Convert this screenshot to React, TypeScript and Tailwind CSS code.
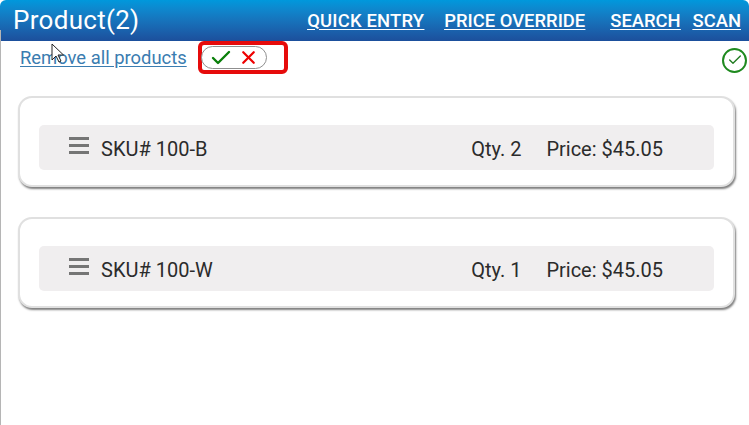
import { Check, X } from "lucide-react";

type Product = {
  sku: string;
  qty: number;
  price: string;
};

const products: Product[] = [
  { sku: "100-B", qty: 2, price: "$45.05" },
  { sku: "100-W", qty: 1, price: "$45.05" },
];

function ProductCard({ sku, qty, price }: Product) {
  return (
    <div className="h-[91px] rounded-[14px] border-2 border-[#e0e0e0] bg-white px-[19px] pt-[27px] shadow-[1px_2px_2px_rgba(0,0,0,0.5)]">
      <div className="flex h-[45px] items-center rounded-[5px] bg-[#f0eeef] pt-[2px] text-[20px] text-[#2b2b2b]">
        <div className="ml-[30px] flex w-[20px] -translate-y-[3px] flex-col gap-[4px]">
          <span className="h-[3px] bg-[#757575]" />
          <span className="h-[3px] bg-[#757575]" />
          <span className="h-[3px] bg-[#757575]" />
        </div>
        <span className="ml-[12px]">SKU# {sku}</span>
        <span className="ml-auto">Qty. {qty}</span>
        <span className="ml-[25px] mr-[51px]">Price: {price}</span>
      </div>
    </div>
  );
}

export default function App() {
  return (
    <div className="relative h-[425px] w-[749px] overflow-hidden bg-white font-['Roboto',sans-serif]">
      <div className="absolute bottom-0 left-0 top-[30px] w-px bg-[#b5b5b5]" />

      <header className="flex h-[41px] items-center rounded-t-[6px] bg-gradient-to-b from-[#0098dc] to-[#1c4f9c] pl-[13px] pr-[8px] text-white">
        <h1 className="text-[26px] font-normal tracking-[0.3px]">Product(2)</h1>
        <nav className="ml-auto flex text-[18.4px] font-medium underline underline-offset-2">
          <a className="mr-[20px] tracking-[0.2px]">QUICK ENTRY</a>
          <a className="mr-[25px]">PRICE OVERRIDE</a>
          <a className="mr-[12px]">SEARCH</a>
          <a>SCAN</a>
        </nav>
      </header>

      <div className="flex h-[33px] items-center pl-[20px] pr-[2px]">
        <a className="text-[18.4px] text-[#3a7cb0] underline underline-offset-2">Remove all products</a>
        <div className="ml-[11px] flex h-[33px] w-[90px] items-center rounded-[6px] border-[4px] border-[#e60b0b]">
          <div className="-ml-px flex h-[23px] w-[66px] shrink-0 items-center gap-[5px] rounded-full border border-[#8f8f8f] bg-white pl-[7px]">
            <Check size={24} strokeWidth={2.4} className="text-[#0a7f0a]" />
            <X size={21} strokeWidth={2.6} className="text-[#ee0000]" />
          </div>
        </div>
        <div className="ml-auto mt-[5px] flex h-[25px] w-[25px] items-center justify-center rounded-full border-2 border-[#1f8a1f]">
          <Check size={16} strokeWidth={2} className="text-[#1f7a1f]" />
        </div>
      </div>

      <div className="ml-[18px] mr-[14px] mt-[22px] flex flex-col gap-[30px]">
        {products.map((product) => (
          <ProductCard key={product.sku} {...product} />
        ))}
      </div>

      {/* mouse pointer captured in the screenshot */}
      <svg viewBox="0 0 14 21" className="absolute left-[51px] top-[43px] h-[21px] w-[14px]">
        <path d="M1 1v16l4-4 3 6 2-1-3-6h5.5z" fill="#fff" stroke="#222" strokeWidth="1" strokeLinejoin="round" />
      </svg>
    </div>
  );
}
